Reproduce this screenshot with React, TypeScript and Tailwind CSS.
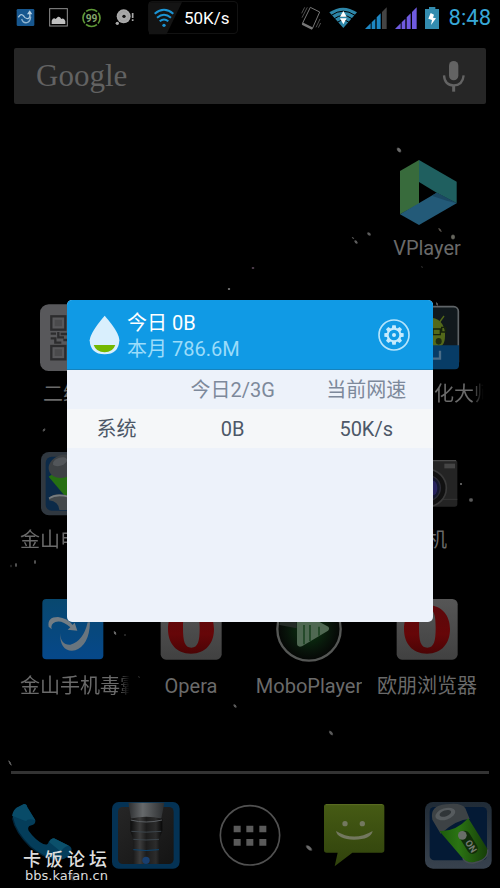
import type { ReactNode } from 'react';

interface IconProps {
  box: string;
  className?: string;
  children: ReactNode;
}

function Icon({ box, className = 'h-20 w-20', children }: IconProps) {
  return (
    <svg viewBox={box} className={`${className} shrink-0`} fill="none" aria-hidden="true">
      {children}
    </svg>
  );
}

/* ---------- wallpaper ---------- */

// x, y, rx, ry, rotation, colour
const specks: [number, number, number, number, number, string][] = [
  [399, 150, 3.4, 2.2, 50, '#6a6a6a'],
  [369, 234, 2.6, 1.8, 40, '#5c5c5c'],
  [353, 238, 1.8, 1, 30, '#4a4a4a'],
  [356, 242, 2.6, 1.7, 50, '#5c5c5c'],
  [440, 230, 3, 1.2, 50, '#55504a'],
  [453, 237, 2.6, 3, 0, '#66665e'],
  [253, 268, 2, 1, 0, '#5a4658'],
  [229, 289, 1.8, 1.2, 0, '#666666'],
  [422, 267, 1.5, 1, 50, '#222222'],
  [437, 304, 2.4, 1.2, 60, '#555555'],
  [44, 430, 2.4, 1.4, -50, '#505050'],
  [16, 565, 1.4, 2.6, 0, '#505050'],
  [11, 566, 1, 2, 0, '#2a2a2a'],
  [35, 562, 1.4, 2.6, 0, '#505050'],
  [461, 484, 1.2, 1.4, 0, '#666666'],
  [471, 500, 2.6, 2.4, 0, '#5a5a5a'],
  [115, 633, 2.6, 1.4, 60, '#666666'],
  [125, 635, 1.4, 1, 0, '#333333'],
  [139, 677, 1.6, 1, 40, '#222222'],
  [235, 706, 2.6, 1.6, 50, '#5a5a5a'],
  [331, 733, 3.4, 1.8, 50, '#5a5a5a'],
  [10, 763, 3.6, 1.2, 60, '#5a5a5a'],
  [309, 848, 4.6, 2.2, 40, '#6a6a6a'],
  [72, 877, 5, 3, 60, '#2c2c2c'],
];

function Wallpaper() {
  return (
    <svg
      viewBox="0 0 500 888"
      preserveAspectRatio="none"
      className="pointer-events-none absolute inset-0 h-full w-full"
      aria-hidden="true"
    >
      <defs>
        <radialGradient id="speck-fade">
          <stop offset="0" stopColor="#ffffff" />
          <stop offset="0.5" stopColor="#ffffff" />
          <stop offset="1" stopColor="#000000" />
        </radialGradient>
        <mask id="speck-mask" maskContentUnits="objectBoundingBox">
          <rect width="1" height="1" fill="url(#speck-fade)" />
        </mask>
      </defs>
      {specks.map(([x, y, rx, ry, angle, color]) => (
        <ellipse
          key={`${x}-${y}`}
          cx={x}
          cy={y}
          rx={rx}
          ry={ry}
          fill={color}
          mask="url(#speck-mask)"
          transform={`rotate(${angle} ${x} ${y})`}
        />
      ))}
    </svg>
  );
}

/* ---------- status bar ---------- */

function Signal({ color, lastColor }: { color: string; lastColor: string }) {
  return (
    <Icon box="0 0 66 66" className="h-[22px] w-[22px]">
      <path d="M0 66 L17 49 V66 Z M20 46 L31 35 V66 H20 Z M35 31 L47 19 V66 H35 Z" fill={color} />
      <path d="M51 15 L65 1 V66 H51 Z" fill={lastColor} />
    </Icon>
  );
}

function StatusBar() {
  return (
    <header className="flex h-9 items-start pr-[9px] pl-4">
      <div className="flex h-[35px] items-center gap-3.5">
        <Icon box="47 24 57 57" className="h-[19px] w-[19px]">
          <rect x="49" y="27" width="53" height="51" rx="4" fill="#17578f" />
          <path d="M54 52 Q62 38 70 48 Q75 58 85 55 Q91 51 88 42" stroke="#a9c6dc" strokeWidth="4" />
          <path d="M80 43 L88 31 L96 43 Z" fill="#b9d2e4" />
          <path d="M64 57 Q68 70 80 68 Q90 65 91 50" stroke="#8fb4d0" strokeWidth="4" />
        </Icon>
        <Icon box="147 24 57 57" className="h-[19px] w-[19px]">
          <rect x="149" y="26" width="53" height="52" stroke="#8f8f8f" strokeWidth="3" />
          <path d="M155 72 V62 Q160 51 167 57 L174 50 Q180 49 184 57 Q191 53 196 63 V72 Z" fill="#c0c0c0" />
        </Icon>
        <Icon box="246 22 58 60" className="h-5 w-[19px]">
          <circle cx="275" cy="52" r="26" stroke="#5f9a37" strokeWidth="5" strokeDasharray="36 4.8" strokeDashoffset="18" />
          <text x="275" y="63" textAnchor="middle" fontSize="31" fontWeight="700" fontFamily="Roboto, sans-serif" fill="#84a56c">
            99
          </text>
        </Icon>
        <Icon box="346 24 57 57" className="h-[19px] w-[19px]">
          <circle cx="372" cy="49" r="21" fill="#a9a9a9" />
          <circle cx="372" cy="49" r="14" stroke="#989898" strokeWidth="2" />
          <circle cx="373" cy="49" r="5" fill="#111111" />
          <circle cx="353" cy="70" r="5" fill="#a9a9a9" />
          <path d="M399 39 V54 M399 58 V63" stroke="#a9a9a9" strokeWidth="5" />
        </Icon>
        <div className="relative flex h-[33px] w-[90px] items-center rounded-sm border border-[#121212] pl-[5px]">
          <Icon box="441 3 100 99" className="absolute inset-0 h-[33px] w-[33px]">
            <path d="M441 3 H541 L494 100 H441 Z" fill="#141414" />
          </Icon>
          <Icon box="456 22 60 60" className="relative h-5 w-5">
            <path d="M458 39 Q486 16 514 39" stroke="#1c94d4" strokeWidth="6" />
            <path d="M465 51 Q486 33 507 51" stroke="#1c94d4" strokeWidth="6" />
            <path d="M473 62 Q486 51 499 62" stroke="#1c94d4" strokeWidth="6" />
            <circle cx="486" cy="74" r="5" fill="#1c94d4" />
          </Icon>
          <span className="ml-[10px] text-[17px] leading-6 text-white">50K/s</span>
        </div>
      </div>

      <div className="ml-auto flex h-[35px] items-center gap-2">
        <Icon box="152 16 60 72" className="h-6 w-5">
          <path d="M180 20 L208 34 L186 84 L156 69 Z" stroke="#777777" strokeWidth="3" strokeLinejoin="round" />
          <path d="M156 69 L186 84" stroke="#777777" strokeWidth="7" />
          <path d="M154 38 L163 20 M155 51 L171 20 M197 80 L209 55 M204 81 L211 67" stroke="#777777" strokeWidth="2" />
        </Icon>
        <Icon box="240 15 84 66" className="h-[22px] w-7">
          <path d="M241 31 Q282 3 324 31 L283 78 Z" fill="#2d86a8" />
          <path d="M247 40 Q282 15 318 40 M256 50 Q282 31 309 50 M265 61 Q283 48 300 61" stroke="#000000" strokeWidth="3" />
          <path d="M283 27 L293 44 H273 Z M273 49 H293 L283 67 Z" fill="#ffffff" />
        </Icon>
        <Signal color="#1d87c4" lastColor="#444444" />
        <Signal color="#6f5be0" lastColor="#6f5be0" />
        <Icon box="525 18 48 66" className="h-[22px] w-4">
          <path d="M537 18 H556 V24 H567 V84 H525 V24 H537 Z" fill="#338caf" />
          <path d="M542 36 L552 41 L549 50 L558 52 L543 72 L546 57 L535 53 Z" fill="#ffffff" />
        </Icon>
        <time className="text-[22px] leading-6 text-[#38a9d8]">8:48</time>
      </div>
    </header>
  );
}

function SearchBar() {
  return (
    <div className="mx-3.5 mt-3 flex h-14 items-center justify-between rounded-xs bg-[#262626] pr-5 pl-[22px]">
      <button
        type="button"
        aria-label="Google search"
        className="font-['Liberation_Serif',serif] text-[31px] leading-9 text-[#626262]"
      >
        Google
      </button>
      <button type="button" aria-label="Voice search">
        <Icon box="573 180 72 99" className="h-[33px] w-6">
          <rect x="594" y="183" width="28" height="58" rx="14" fill="#636363" />
          <path d="M579 226 Q581 256 608 256 Q635 256 638 226" stroke="#636363" strokeWidth="7" />
          <path d="M608 256 V275" stroke="#636363" strokeWidth="9" />
        </Icon>
      </button>
    </div>
  );
}

/* ---------- launcher icons ---------- */

function VPlayerIcon() {
  return (
    <Icon box="141 66 240 240">
      <path d="M180 123 L237 90 V222 L180 253 Z" fill="#386b3c" />
      <path d="M237 90 L350 155 V220 L290 188 L237 156 Z" fill="#1f5f5f" />
      <path d="M180 253 L290 188 L350 220 L237 285 Z" fill="#235a78" />
      <path d="M290 188 L350 220 L320 212 L275 197 Z" fill="#1b4963" />
    </Icon>
  );
}

function QrIcon() {
  return (
    <Icon box="99 24 240 240">
      <rect x="120" y="43" width="198" height="200" rx="26" fill="#58585b" />
      <g stroke="#2c2c2e" strokeWidth="7">
        <rect x="154" y="79" width="42" height="40" />
        <rect x="154" y="168" width="42" height="40" />
        <rect x="242" y="79" width="42" height="40" />
        <path d="M152 131 H168 M175 126 V142 H192 M152 145 H166 V158 H184 M190 150 H204 M182 132 H204" />
      </g>
      <path d="M164 89 h22 v20 h-22 Z M164 178 h22 v20 h-22 Z" fill="#4a4a4c" />
    </Icon>
  );
}

function BatteryDoctorIcon() {
  return (
    <Icon box="99 462 240 240">
      <rect x="123" y="486" width="194" height="190" rx="24" fill="#303840" />
      <rect x="137" y="500" width="166" height="162" rx="18" fill="#0c2a48" />
      <path d="M146 560 L205 520 V630 Z" fill="#266f12" />
      <ellipse cx="188" cy="529" rx="43" ry="34" fill="#3d4144" transform="rotate(-20 188 529)" />
      <ellipse cx="180" cy="515" rx="22" ry="12" fill="#52565a" transform="rotate(-20 180 515)" />
      <path d="M147 625 Q162 605 205 618 L206 660 H178 Q176 634 147 631 Z" fill="#43484b" />
      <path d="M147 625 Q170 610 205 620" stroke="#777c7f" strokeWidth="5" />
    </Icon>
  );
}

function AndroidMasterIcon() {
  return (
    <Icon box="-114 24 240 240">
      <rect x="-88" y="50" width="188" height="180" rx="14" fill="#11191d" stroke="#5f6467" strokeWidth="5" />
      <path d="M-60 170 Q-50 82 10 82 Q56 84 60 130 Q62 170 40 170 Z" fill="#53691a" />
      <path d="M44 96 L57 78" stroke="#53691a" strokeWidth="4" />
      <path d="M24 117 H46 V134 H24 Z M50 112 H62 V126 H50 Z M46 121 H52" stroke="#17230c" strokeWidth="4" />
      <ellipse cx="41" cy="154" rx="9" ry="10" fill="#1f2c10" />
      <path d="M-92 166 H102 V226 Q102 238 90 238 H-80 Q-92 238 -92 226 Z" fill="#073c66" />
      <path d="M0 206 H45 V182" stroke="#4a6c87" strokeWidth="7" />
    </Icon>
  );
}

function CameraIcon() {
  return (
    <Icon box="-114 462 240 240">
      <rect x="-88" y="510" width="185" height="140" rx="8" fill="#242424" />
      <path d="M-84 512 H93" stroke="#4a4a4a" strokeWidth="4" />
      <rect x="58" y="521" width="32" height="14" fill="#454545" />
      <path d="M-88 628 H97" stroke="#353535" strokeWidth="3" />
      <circle cx="8" cy="594" r="56" fill="#111111" stroke="#3a3a3a" strokeWidth="5" />
      <circle cx="8" cy="594" r="38" fill="#15172f" stroke="#2c2c34" strokeWidth="4" />
      <ellipse cx="24" cy="594" rx="13" ry="22" fill="#28245e" />
    </Icon>
  );
}

function DubaIcon() {
  return (
    <Icon box="99 15 240 240">
      <defs>
        <linearGradient id="duba" x1="0" y1="0" x2="0" y2="1">
          <stop offset="0" stopColor="#08486f" />
          <stop offset="1" stopColor="#06488a" />
        </linearGradient>
      </defs>
      <rect x="127" y="42" width="183" height="181" rx="12" fill="url(#duba)" />
      <path d="M146 125 Q141 96 174 96 Q202 99 218 120 L224 113 L232 137 L203 134 L211 127 Q185 104 166 111 Q151 117 155 133 Z" fill="#737d84" />
      <path d="M180 143 Q182 181 211 179 Q250 169 263 112 L270 112 Q268 180 226 196 Q180 204 180 143 Z" fill="#69757e" />
    </Icon>
  );
}

function OperaIcon() {
  return (
    <Icon box="411 15 240 240">
      <defs>
        <linearGradient id="opera-tile" x1="0" y1="0" x2="0" y2="1">
          <stop offset="0" stopColor="#565656" />
          <stop offset="1" stopColor="#414141" />
        </linearGradient>
        <linearGradient id="opera-o" x1="0" y1="0" x2="0" y2="1">
          <stop offset="0" stopColor="#5c090b" />
          <stop offset="0.6" stopColor="#660608" />
          <stop offset="1" stopColor="#4b0405" />
        </linearGradient>
      </defs>
      <rect x="440" y="42" width="183" height="182" rx="16" fill="url(#opera-tile)" />
      <path
        fillRule="evenodd"
        fill="url(#opera-o)"
        d="M531 60 C578 60 600 94 600 132 C600 174 576 206 531 206 C486 206 462 174 462 132 C462 94 484 60 531 60 Z M532 70 C512 70 507 90 507 129 C507 168 512 188 532 188 C552 188 557 168 557 129 C557 90 552 70 532 70 Z"
      />
    </Icon>
  );
}

function MoboPlayerIcon() {
  return (
    <Icon box="57 15 240 240">
      <defs>
        <radialGradient id="mobo">
          <stop offset="0" stopColor="#0b3a12" />
          <stop offset="0.7" stopColor="#08140a" />
          <stop offset="1" stopColor="#050605" />
        </radialGradient>
      </defs>
      <circle cx="177" cy="132" r="95" fill="url(#mobo)" stroke="#555755" strokeWidth="7" />
      <path d="M88 120 Q92 100 102 91 H140 V130 Z" fill="#242b26" />
      <path d="M141 84 Q150 78 160 85 L235 125 Q240 130 234 137 L156 184 Q141 188 141 175 Z" fill="#4f6852" />
      <path d="M162 120 V178 M180 120 V168 M207 125 V152" stroke="#123c18" strokeWidth="4" />
    </Icon>
  );
}

function PhoneIcon() {
  return (
    <Icon box="6 105 240 240">
      <path
        d="M72 132 Q80 132 82 142 L106 181 Q107 191 99 194 L88 198 Q82 203 86 212 Q105 239 130 252 Q144 257 146 245 Q151 236 162 235 L207 257 Q217 263 214 273 L209 285 Q196 300 169 300 Q127 291 91 260 Q46 218 38 175 Q39 151 50 143 Z"
        fill="#043d5a"
      />
      <path d="M72 132 Q80 132 82 142 L106 181 Q84 173 78 184 L36 167 Q40 149 50 143 Z" fill="#084b68" />
      <path d="M162 235 L207 257 Q192 258 183 275 L148 247 Q151 236 162 235 Z" fill="#0b506b" />
      <path d="M38 175 Q46 216 91 260 Q127 291 169 300" stroke="#022438" strokeWidth="4" />
    </Icon>
  );
}

function TorchIcon() {
  return (
    <Icon box="318 105 240 240">
      <defs>
        <linearGradient id="torch-bg" x1="0" y1="0" x2="1" y2="1">
          <stop offset="0" stopColor="#262626" />
          <stop offset="1" stopColor="#141414" />
        </linearGradient>
        <linearGradient id="torch-body" x1="0" y1="0" x2="1" y2="0">
          <stop offset="0" stopColor="#0c0c0c" />
          <stop offset="0.3" stopColor="#3c3c3c" />
          <stop offset="0.5" stopColor="#1c1c1c" />
          <stop offset="0.8" stopColor="#2c2c2c" />
          <stop offset="1" stopColor="#070707" />
        </linearGradient>
        <linearGradient id="torch-beam" x1="0" y1="0" x2="1" y2="0">
          <stop offset="0" stopColor="#2c2e30" />
          <stop offset="0.4" stopColor="#66696b" />
          <stop offset="1" stopColor="#2c2e30" />
        </linearGradient>
      </defs>
      <rect x="336" y="126" width="203" height="200" rx="20" fill="#043254" />
      <rect x="354" y="141" width="167" height="171" rx="14" fill="url(#torch-bg)" />
      <path d="M385 128 H493 L483 180 H394 Z" fill="url(#torch-beam)" />
      <path d="M391 176 Q438 164 487 176 V212 L478 236 V312 H399 V236 L391 212 Z" fill="url(#torch-body)" />
      <path d="M392 180 Q438 192 486 180" stroke="#5b5f63" strokeWidth="3" />
      <path d="M394 214 Q438 219 484 214 M400 238 Q438 242 477 238" stroke="#3c454c" strokeWidth="3" />
      <path d="M400 269 Q438 274 477 269" stroke="#0b4470" strokeWidth="3" />
      <circle cx="438" cy="301" r="11" fill="#183f70" />
    </Icon>
  );
}

function AppsIcon() {
  return (
    <Icon box="60 105 240 240">
      <circle cx="180" cy="226" r="89" stroke="#515151" strokeWidth="5" />
      <path
        d="M131 197h21v20h-21Z M169 197h21v20h-21Z M208 197h21v20h-21Z M131 237h21v20h-21Z M169 237h21v20h-21Z M208 237h21v20h-21Z"
        fill="#5a5a5a"
      />
    </Icon>
  );
}

function MessageIcon() {
  return (
    <Icon box="372 105 240 240">
      <defs>
        <linearGradient id="message" x1="0" y1="0" x2="0" y2="1">
          <stop offset="0" stopColor="#465b14" />
          <stop offset="1" stopColor="#30420c" />
        </linearGradient>
      </defs>
      <path
        d="M410 132 H575 Q583 132 583 140 V270 Q583 278 575 278 H487 L434 319 L443 278 H410 Q402 278 402 270 V140 Q402 132 410 132 Z"
        fill="url(#message)"
      />
      <path d="M408 134 H577" stroke="#5c6e24" strokeWidth="3" />
      <circle cx="465" cy="191" r="8" fill="#73785f" />
      <circle cx="517" cy="191" r="8" fill="#73785f" />
      <path d="M438 213 Q492 246 548 213 Q543 239 492 239 Q443 238 438 213 Z" fill="#73785f" />
    </Icon>
  );
}

function PowerIcon() {
  return (
    <Icon box="684 105 240 240">
      <defs>
        <linearGradient id="power-frame" x1="0" y1="0" x2="0" y2="1">
          <stop offset="0" stopColor="#202b36" />
          <stop offset="1" stopColor="#38424e" />
        </linearGradient>
        <linearGradient id="power-cell" x1="0" y1="0" x2="1" y2="0">
          <stop offset="0" stopColor="#1c5a0c" />
          <stop offset="0.4" stopColor="#2b7413" />
          <stop offset="1" stopColor="#163d08" />
        </linearGradient>
      </defs>
      <rect x="705" y="126" width="200" height="200" rx="24" fill="url(#power-frame)" />
      <rect x="719" y="141" width="172" height="160" rx="14" fill="#041a35" />
      <path d="M727 179 Q718 137 768 133 Q814 126 826 145 L839 177 Q800 178 752 221 Z" fill="#3d4245" />
      <ellipse cx="766" cy="162" rx="31" ry="17" fill="#565b5e" transform="rotate(-18 766 162)" />
      <ellipse cx="766" cy="160" rx="18" ry="9" fill="#303538" transform="rotate(-18 766 160)" />
      <path d="M748 213 Q794 217 835 175 L893 268 Q895 299 850 307 Q829 309 818 295 Z" fill="url(#power-cell)" />
      <path d="M893 268 Q897 300 850 309 Q828 311 818 295" stroke="#454d51" strokeWidth="4" />
      <rect x="798" y="231" width="76" height="32" rx="16" fill="#102c0a" transform="rotate(58 836 247)" />
      <circle cx="817" cy="226" r="13" fill="#696e69" />
      <text
        x="843"
        y="269"
        textAnchor="middle"
        fontSize="28"
        fontWeight="700"
        fontFamily="Roboto, sans-serif"
        fill="#777d75"
        transform="rotate(58 843 259)"
      >
        ON
      </text>
    </Icon>
  );
}

/* ---------- home screen ---------- */

interface AppEntry {
  label: string;
  icon: ReactNode;
  cell: string;
  long?: boolean;
}

const apps: AppEntry[] = [
  { label: 'VPlayer', icon: <VPlayerIcon />, cell: 'col-start-4 row-start-1' },
  { label: '二维码', icon: <QrIcon />, cell: 'col-start-1 row-start-2' },
  { label: '安卓优化大师', icon: <AndroidMasterIcon />, cell: 'col-start-4 row-start-2', long: true },
  { label: '金山电池医生', icon: <BatteryDoctorIcon />, cell: 'col-start-1 row-start-3', long: true },
  { label: '相机', icon: <CameraIcon />, cell: 'col-start-4 row-start-3' },
  { label: '金山手机毒霸', icon: <DubaIcon />, cell: 'col-start-1 row-start-4', long: true },
  { label: 'Opera', icon: <OperaIcon />, cell: 'col-start-2 row-start-4' },
  { label: 'MoboPlayer', icon: <MoboPlayerIcon />, cell: 'col-start-3 row-start-4' },
  { label: '欧朋浏览器', icon: <OperaIcon />, cell: 'col-start-4 row-start-4' },
];

const dock = [
  { name: 'Phone', icon: <PhoneIcon /> },
  { name: 'Torch', icon: <TorchIcon /> },
  { name: 'Apps', icon: <AppsIcon /> },
  { name: 'Messaging', icon: <MessageIcon /> },
  { name: 'Power', icon: <PowerIcon /> },
];

function AppShortcut({ label, icon, cell, long = false }: AppEntry) {
  return (
    <button type="button" className={`flex min-w-0 flex-col items-center gap-0.5 ${cell}`}>
      {icon}
      <span
        className={`max-w-full overflow-hidden text-xl leading-7 whitespace-nowrap text-[#6a6a6a] ${
          long ? 'w-full pl-1.5 text-left [mask-image:linear-gradient(to_right,black_88%,transparent_98%)]' : ''
        }`}
      >
        {label}
      </span>
    </button>
  );
}

/* ---------- traffic dialog ---------- */

const traffic = [{ name: '系统', today: '0B', speed: '50K/s' }];

function TrafficDialog() {
  return (
    <section
      role="dialog"
      aria-label="今日流量"
      className="min-h-[322px] w-full overflow-hidden rounded-[5px] bg-[#edf2fa]"
    >
      <div className="flex h-[70px] items-center border-b border-[#1583bd] bg-[#109ae5] pr-[23px] pl-[22px]">
        <Icon box="90 75 96 120" className="h-10 w-8">
          <path d="M137 77 Q181 127 181 151 Q179 193 137 193 Q94 193 92 151 Q94 127 137 77 Z" fill="#d9effd" />
          <path d="M104 165 H169 Q161 187 137 187 Q112 187 104 165 Z" fill="#74b800" />
        </Icon>
        <div className="ml-1.5 pt-0.5 text-xl leading-[26px]">
          <p className="text-white">今日 0B</p>
          <p className="text-[#9bdcfa]">本月 786.6M</p>
        </div>
        <button type="button" aria-label="设置" className="ml-auto">
          <Icon box="955 87 96 96" className="h-8 w-8">
            <circle cx="1003" cy="135" r="45" stroke="#b5e4fb" strokeWidth="5" />
            <circle cx="1003" cy="135" r="19" stroke="#c6ebfd" strokeWidth="6" />
            <circle cx="1003" cy="135" r="6" fill="#c6ebfd" />
            {[0, 45, 90, 135, 180, 225, 270, 315].map((angle) => (
              <path
                key={angle}
                d="M998 106 H1008 L1010 117 H996 Z"
                fill="#c6ebfd"
                transform={`rotate(${angle} 1003 135)`}
              />
            ))}
          </Icon>
        </button>
      </div>

      <table className="w-full table-fixed text-center text-xl leading-7">
        <thead>
          <tr className="h-[39px] text-[#7d899b]">
            <th className="w-[27%] font-normal" aria-label="应用" />
            <th className="font-normal">今日2/3G</th>
            <th className="font-normal">当前网速</th>
          </tr>
        </thead>
        <tbody>
          {traffic.map((row) => (
            <tr key={row.name} className="h-[39px] bg-[#f5f7f9] text-[#4d5868]">
              <td>{row.name}</td>
              <td>{row.today}</td>
              <td>{row.speed}</td>
            </tr>
          ))}
        </tbody>
      </table>
    </section>
  );
}

export default function App() {
  return (
    <div className="relative flex min-h-screen flex-col overflow-hidden bg-black font-[Roboto,'Noto_Sans_CJK_SC',sans-serif]">
      <Wallpaper />
      <StatusBar />
      <SearchBar />

      <main className="grid auto-rows-[146px] grid-cols-4 px-3.5 pt-12">
        {apps.map((app) => (
          <AppShortcut key={app.label} {...app} />
        ))}
      </main>

      <nav className="mt-auto" aria-label="Dock">
        <div className="mx-[11px] h-[3px] bg-[#333333]" />
        <div className="-mx-2.5 grid grid-cols-5 justify-items-center pt-[21px] pb-[13px]">
          {dock.map((item) => (
            <button key={item.name} type="button" aria-label={item.name}>
              {item.icon}
            </button>
          ))}
        </div>
      </nav>

      <div className="absolute inset-0 flex items-center justify-center px-[67px] pt-[34px]">
        <TrafficDialog />
      </div>

      <div className="pointer-events-none absolute bottom-1 left-[23px] text-[#dddddd]">
        <p className="flex gap-1 text-lg leading-4 font-medium">
          <span>卡</span>
          <span>饭</span>
          <span>论</span>
          <span>坛</span>
        </p>
        <p className="pl-0.5 font-['DejaVu_Sans',sans-serif] text-[13px] leading-4">bbs.kafan.cn</p>
      </div>
    </div>
  );
}
